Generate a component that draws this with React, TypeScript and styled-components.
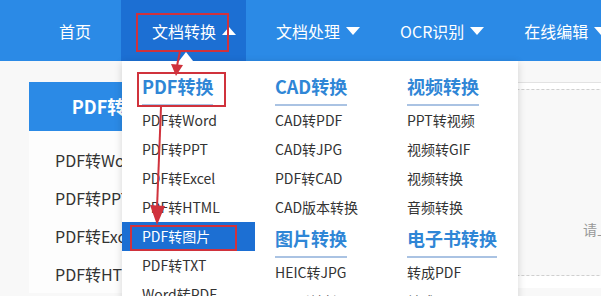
import React from "react";
import styled, { createGlobalStyle } from "styled-components";

const FONT = `"Noto Sans CJK SC", "Noto Sans", "Liberation Sans", sans-serif`;

const GlobalStyle = createGlobalStyle`
  html, body {
    margin: 0;
    padding: 0;
    overflow: hidden;
    background: #f8f8f8;
    font-family: ${FONT};
  }
`;

const navItems = [
  { label: "首页", caret: false },
  { label: "文档转换", caret: true, active: true },
  { label: "文档处理", caret: true },
  { label: "OCR识别", caret: true },
  { label: "在线编辑", caret: true },
];

const sideItems = ["PDF转Word", "PDF转PPT", "PDF转Excel", "PDF转HTML"];

type Group = { title: string; items: string[] };

const columns: Group[][] = [
  [
    {
      title: "PDF转换",
      items: ["PDF转Word", "PDF转PPT", "PDF转Excel", "PDF转HTML", "PDF转图片", "PDF转TXT", "Word转PDF"],
    },
  ],
  [
    { title: "CAD转换", items: ["CAD转PDF", "CAD转JPG", "PDF转CAD", "CAD版本转换"] },
    { title: "图片转换", items: ["HEIC转JPG", "Word转长图"] },
  ],
  [
    { title: "视频转换", items: ["PPT转视频", "视频转GIF", "视频转换", "音频转换"] },
    { title: "电子书转换", items: ["转成PDF", "转成TXT"] },
  ],
];

export default function App() {
  return (
    <Page>
      <GlobalStyle />
      <NavBar>
        {navItems.map((n) => (
          <NavItem key={n.label} $active={!!n.active} $caret={n.caret}>
            {n.label}
            {n.caret && <Caret $up={!!n.active} />}
          </NavItem>
        ))}
      </NavBar>

      <Main>
        <Sidebar>
          <SideHead>PDF转换</SideHead>
          <SideList>
            {sideItems.map((s) => (
              <SideItem key={s}>{s}</SideItem>
            ))}
          </SideList>
        </Sidebar>
        <Card>
          <DropZone>
            <Hint>请上传文件</Hint>
          </DropZone>
        </Card>
      </Main>

      <Pointer />
      <Dropdown>
        {columns.map((col, ci) => (
          <Column key={ci}>
            {col.map((g, gi) => (
              <React.Fragment key={g.title}>
                <GroupHead $first={gi === 0}>
                  <GroupTitle>{g.title}</GroupTitle>
                </GroupHead>
                {g.items.map((it) => (
                  <MenuItem key={it} $hot={it === "PDF转图片"}>
                    {it}
                  </MenuItem>
                ))}
              </React.Fragment>
            ))}
          </Column>
        ))}
      </Dropdown>

      <Marks width="601" height="296" viewBox="0 0 601 296">
        <g fill="none" stroke="#d0323c" strokeWidth="2">
          <rect x="137" y="14" width="91" height="37" />
          <rect x="138" y="73" width="87" height="33" />
          <rect x="131" y="226" width="105" height="24" />
          <line x1="180" y1="51" x2="177" y2="66" />
          <line x1="161" y1="107" x2="157" y2="208" />
        </g>
        <g fill="#d0323c">
          <polygon points="171,64 183,65 176,76" />
          <polygon points="150,205 165,206 157,225" />
        </g>
      </Marks>
    </Page>
  );
}

const Page = styled.div`
  position: relative;
  width: 601px;
  height: 296px;
  overflow: hidden;
  background: #f8f8f8;
`;

const NavBar = styled.div`
  display: flex;
  align-items: stretch;
  height: 61px;
  padding-left: 29px;
  background: #2b8ae6;
`;

const NavItem = styled.div<{ $active: boolean; $caret: boolean }>`
  display: flex;
  align-items: center;
  padding: 0 ${(p) => (p.$caret ? "10px" : "30px")} 0 30px;
  ${(p) => p.$active && "padding-left: 31px; padding-right: 10px;"}
  background: ${(p) => (p.$active ? "#1c6fd3" : "transparent")};
  color: #fff;
  font-size: 16px;
  line-height: 22px;
  white-space: nowrap;
`;

const Caret = styled.span<{ $up: boolean }>`
  display: inline-block;
  width: 0;
  height: 0;
  margin-left: 6px;
  border-left: 7px solid transparent;
  border-right: 7px solid transparent;
  ${(p) =>
    p.$up ? "border-bottom: 8px solid #fff;" : "border-top: 8px solid #fff;"}
`;

const Main = styled.div`
  display: flex;
  gap: 20px;
  padding: 21px 0 0 29px;
`;

const Sidebar = styled.div`
  flex: 0 0 157px;
  background: #fdfdfd;
`;

const SideHead = styled.div`
  height: 49px;
  line-height: 49px;
  text-align: center;
  background: #2b8ae6;
  color: #fff;
  font-size: 18px;
  font-weight: 700;
`;

const SideList = styled.div`
  padding-top: 10px;
`;

const SideItem = styled.div`
  height: 38px;
  line-height: 38px;
  padding-left: 26px;
  font-size: 16px;
  color: #333;
  white-space: nowrap;
`;

const Card = styled.div`
  flex: 0 0 824px;
  height: 206px;
  padding-top: 6px;
  background: #fff;
  border-top: 1px solid #e2e2e2;
  box-sizing: border-box;
`;

const DropZone = styled.div`
  height: 187px;
  border-top: 1px dashed #cfcfcf;
  border-bottom: 1px dashed #cfcfcf;
  background: #f8f8f8;
  text-align: center;
  box-sizing: border-box;
  padding-top: 129px;
`;

const Hint = styled.div`
  font-size: 14px;
  line-height: 20px;
  color: #999;
`;

const Dropdown = styled.div`
  position: absolute;
  left: 122px;
  top: 61px;
  width: 396px;
  height: 260px;
  display: grid;
  grid-template-columns: 133px 132px 131px;
  background: #fff;
  box-shadow: 0 2px 8px rgba(0, 0, 0, 0.16);
`;

const Pointer = styled.div`
  position: absolute;
  left: 179px;
  top: 52px;
  width: 0;
  height: 0;
  border-left: 7px solid transparent;
  border-right: 7px solid transparent;
  border-bottom: 9px solid #fff;
  z-index: 2;
`;

const Column = styled.div`
  display: flex;
  flex-direction: column;
`;

const GroupHead = styled.div<{ $first: boolean }>`
  padding: ${(p) => (p.$first ? "11px" : "2px")} 0 0 20px;
`;

const GroupTitle = styled.span`
  display: inline-block;
  padding-bottom: 4px;
  border-bottom: 2px solid #aac3e3;
  font-size: 18px;
  line-height: 28px;
  font-weight: 700;
  color: #2f86d6;
  white-space: nowrap;
`;

const MenuItem = styled.div<{ $hot: boolean }>`
  height: 29px;
  line-height: 29px;
  padding-left: 20px;
  font-size: 14px;
  white-space: nowrap;
  color: ${(p) => (p.$hot ? "#fff" : "#333")};
  background: ${(p) => (p.$hot ? "#1c6fd3" : "transparent")};
`;

const Marks = styled.svg`
  position: absolute;
  left: 0;
  top: 0;
  pointer-events: none;
  z-index: 3;
`;
